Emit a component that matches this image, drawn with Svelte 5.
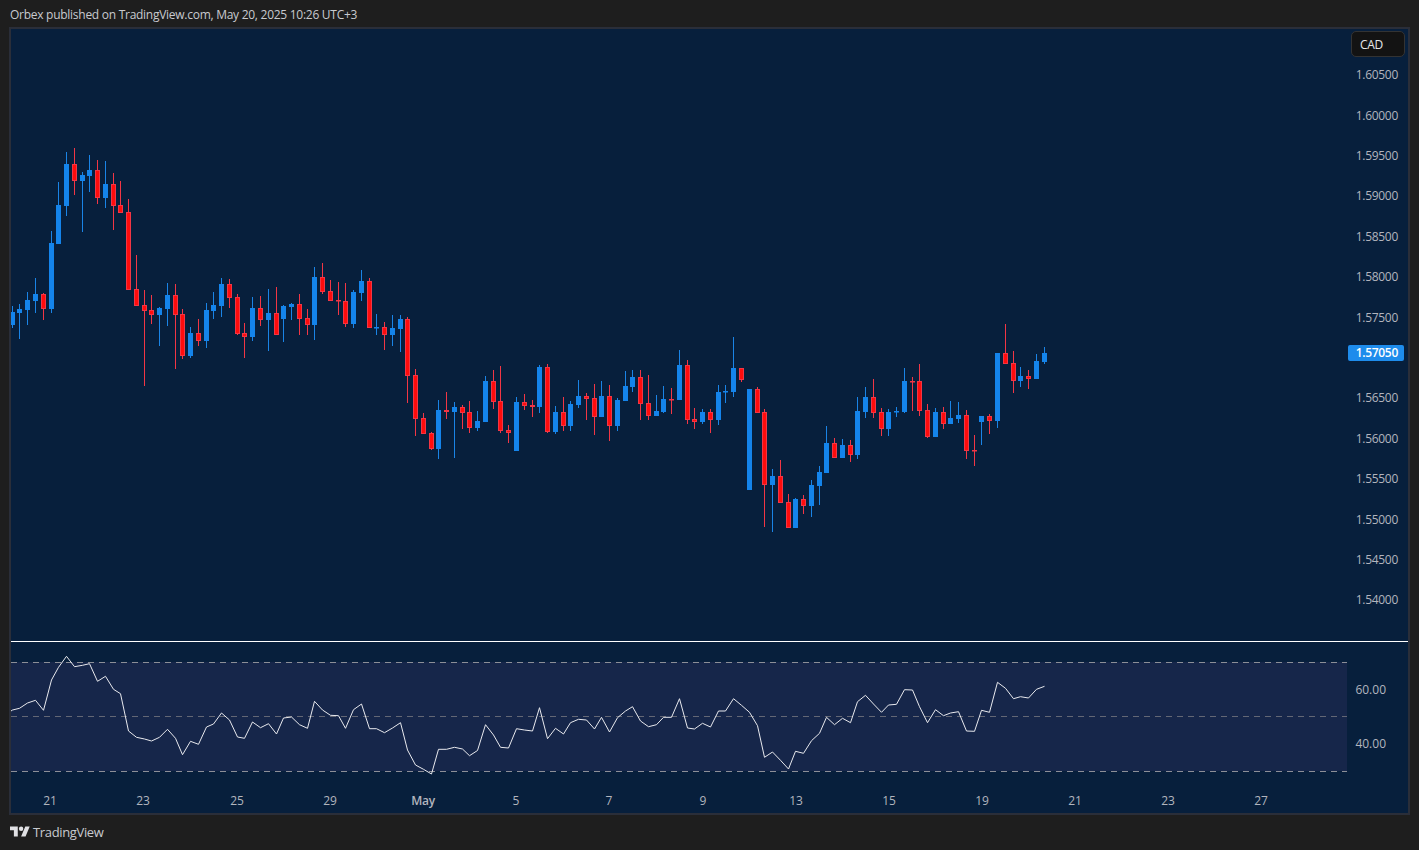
<script>
  const raw = `B528,546,585,594 B522,537,549,627 B486,510,540,585 B444,492,513,549 R489,492,537,570 B303,339,537,549 B156,225,342,342 B66,102,228,258 R54,102,153,195 B126,135,153,306 B75,120,138,186 R90,120,204,222 B93,162,204,234 R129,162,228,300 R153,225,249,249 R207,246,480,480 R375,477,528,528 R480,525,543,768 R495,540,555,582 B531,534,555,648 B459,495,537,588 R462,495,555,717 R537,552,678,687 B591,609,678,684 R567,609,633,648 B519,540,633,654 B486,525,543,567 B444,462,528,561 R447,462,504,534 R492,501,612,615 R579,609,621,684 B501,534,621,633 R498,534,570,588 B477,549,570,663 R471,549,615,615 B525,528,567,636 B519,522,531,570 R492,522,567,615 R537,564,585,615 B411,441,585,630 R399,441,486,492 R450,483,513,513 R456,510,513,555 R459,513,582,591 B480,486,582,594 B420,453,489,513 R444,453,594,594 B552,591,594,615 R576,591,615,660 B555,594,615,648 B555,567,597,666`;
  const toY = (z, o) => o + z / 3;
  const parse = (s, o) => s.split(' ').map((t) => {
    const [h, a, b, l] = t.slice(1).split(',').map((n) => toY(+n, o));
    return { up: t[0] === 'B', h, a, b, l };
  });
  const part1 = parse(raw, 130);
  const part2 = [{ up: false, h: 317, a: 319, b: 376, l: 403 }].concat(parse(`R117,135,267,318 R249,264,312,312 R306,309,357,360 B210,240,357,387 R186,240,246,267 B216,231,246,384 R225,231,249,297 R213,246,294,309 B243,273,294,303 B138,153,276,276 R120,153,216,237 R108,213,303,309 R285,300,309,339 B201,216,363,363 R192,216,228,240 R210,225,231,261 B105,111,231,249 R102,111,306,309 B228,246,306,312 R201,246,288,303 B213,222,288,303 B150,198,225,234 R189,198,207,270 R162,204,261,315 B153,198,261,261 R165,198,288,333 B204,210,288,303 B123,168,213,213 B120,141,171,186 R120,141,222,270 R135,219,258,270 B195,243,258,258 B168,207,246,249 R174,207,210,252 B60,105,210,210 R90,105,270,282 R234,267,276,297 B237,246,276,282 R237,246,270,309 B165,186,270,285 B165,183,186,219 B21,114,186,201 R114,114,150,156 B177,177,480,480 R171,177,249,249 R237,246,465,591 B417,438,465,606 R390,438,519,519 R492,516,594,594 B504,507,594,594`, 330));
  const part3 = parse(`R555,567,588,612 B510,525,588,621 B468,486,528,585 B348,399,489,489 R384,399,444,444 B387,405,444,444 R390,405,435,456 B261,303,435,447 B231,261,306,324 R207,261,309,324 R294,306,357,378 B297,306,357,378 B291,303,306,321 B174,213,306,309 R201,213,216,303 R162,213,303,318 R282,300,381,384 B294,306,381,381 R291,306,342,357 B273,324,342,342 B276,315,327,339 R300,315,423,447 R375,420,423,468 B318,318,336,405 R312,318,333,372 B129,129,333,354 R42,129,162,162 R123,159,213,249 B171,198,213,231 R180,198,207,237 B132,153,207,207 B111,129,156,162`, 310);
  const pixelX = (i) => 12.24 + i * 7.758;
  const candles = [...part1, ...part2, ...part3].map((c, i) => {
    const px = Math.floor(pixelX(i));
    const top = Math.round(c.a);
    return { ...c, px, top, hi: Math.round(c.h), lo: Math.round(c.l), height: Math.max(1, Math.round(c.b) - top) };
  });

  const rsiHead = [240,235,219,211,241,150,112,79,110,106,101,154,139,178,191,303,322,327,333,322,298,325,374,334,343,291,282,249,270,321,325,276,293,281,312,264,261,284,295,214,240,256,257,295,239,222,296,296,308,294,278,360,405,418,432,358,358,352,357,377].map((z) => 630 + z / 3);
  const rsiTail = [750.5,724.7,735,747.3,748,728.7,730,731,707.7,738.7,728.3,734,722.7,719.3,720,729,717.3,732,717.7,711,706.7,721,726.7,724.7,717.3,717.3,698.7,728,729,723.3,727,711,711,698.7,705.3,712.3,725.7,757.3,752,760.3,769,751.3,753.3,740.7,733.3,717.3,724.7,718.3,722.7,701.7,695.3,704,712.3,705,704.3,689.7,690,706.7,722.7,709.7,715.7,713,711.7,731,731.3,710.3,712.3,682.3,688.3,698.7,696.7,698,689.3,686.3];
  const rsi = '11,711 ' + [...rsiHead, ...rsiTail].map((y, i) => `${(Math.floor(pixelX(i)) + 0.5).toFixed(1)},${y.toFixed(1)}`).join(' ');

  const prices = ['1.60500','1.60000','1.59500','1.59000','1.58500','1.58000','1.57500','1.57000','1.56500','1.56000','1.55500','1.55000','1.54500','1.54000'];
  const priceTicks = prices.map((p, i) => ({ p, y: 75 + i * 40.4 })).filter((t) => t.p !== '1.57000');
  const dates = [['21',50],['23',143],['25',237],['29',330],['May',423],['5',516],['7',609],['9',703],['13',796],['15',889],['19',982],['21',1075],['23',1168],['27',1261]];
</script>

<div class="page">
  <header class="title">Orbex published on TradingView.com, May 20, 2025 10:26 UTC+3</header>
  <main class="frame">
    <svg class="chart" viewBox="0 0 1419 850" width="1419" height="850" role="img" aria-label="Candlestick chart with RSI">
      <rect class="band" x="11" y="662" width="1336" height="109" />
      <rect class="sep" x="11" y="641" width="1397" height="1" />
      <line class="dash" x1="11" x2="1347" y1="662.5" y2="662.5" />
      <line class="dash mid" x1="11" x2="1347" y1="716.5" y2="716.5" />
      <line class="dash" x1="11" x2="1347" y1="771.5" y2="771.5" />
      {#each candles as c}
        <g class={c.up ? 'up' : 'down'}>
          <rect class="wick" x={c.px} y={c.hi} width="1" height={Math.max(0, c.lo - c.hi)} />
          <rect class="body" x={c.px - 1.5} y={c.top + 0.5} width="4" height={Math.max(0.5, c.height - 1)} />
        </g>
      {/each}
      <polyline class="rsi" points={rsi} />
      {#each priceTicks as t}
        <text class="axis price" x="1398" y={t.y + 4.2} text-anchor="end">{t.p}</text>
      {/each}
      <text class="axis" x="1386" y="694" text-anchor="end">60.00</text>
      <text class="axis" x="1386" y="748" text-anchor="end">40.00</text>
      {#each dates as d}
        <text class="axis" class:strong={d[0] === 'May'} x={d[1]} y="805" text-anchor="middle">{d[0]}</text>
      {/each}
    </svg>
    <div class="currency">CAD</div>
    <div class="tag">1.57050</div>
  </main>
  <footer class="brand">
    <svg class="logo" viewBox="0 0 36 28" width="20" height="16" aria-hidden="true">
      <path d="M14 22H7V11H0V4h14v18zM28 22h-8l7.5-18h8L28 22z" />
      <circle cx="20" cy="8" r="4" />
    </svg>
    <span>TradingView</span>
  </footer>
</div>

<style>
  :global(body) {
    margin: 0;
    background: #1e1e1e;
    overflow: hidden;
  }
  .page {
    width: 1419px;
    height: 850px;
    display: flex;
    flex-direction: column;
    font-family: "Open Sans", "Noto Sans", sans-serif;
    color: #d1d4dc;
    background: #1e1e1e;
  }
  .title {
    height: 27px;
    padding: 7px 0 0 10px;
    box-sizing: border-box;
    font-size: 12px;
    line-height: 16px;
    letter-spacing: -0.27px;
    color: #c8cacf;
  }
  .frame {
    position: relative;
    margin-left: 9px;
    width: 1401px;
    height: 788px;
    box-sizing: border-box;
    border: 2px solid #2a2e39;
    background: #071f3c;
    overflow: hidden;
  }
  .chart {
    position: absolute;
    left: -11px;
    top: -29px;
    display: block;
  }
  .band { fill: #16264a; }
  .sep { fill: #ffffff; }
  .dash {
    stroke: #8c8f98;
    stroke-width: 1;
    stroke-dasharray: 6 5;
    shape-rendering: crispEdges;
  }
  .dash.mid { stroke: #636775; }
  .body { stroke-width: 1; }
  .up .wick { fill: #1a84e6; }
  .up .body { fill: #1484eb; stroke: #1484eb; }
  .down .wick { fill: #f23645; }
  .down .body { fill: #ff0c0c; stroke: #f23645; }
  .rsi {
    fill: none;
    stroke: #e8e9ee;
    stroke-width: 1;
    stroke-linejoin: round;
  }
  .axis {
    font-size: 12px;
    fill: #b2b5be;
  }
  .axis.price { letter-spacing: -0.3px; }
  .axis.strong { font-weight: 600; letter-spacing: -0.3px; }
  .currency {
    position: absolute;
    left: 1340px;
    top: 2px;
    width: 54px;
    height: 26px;
    box-sizing: border-box;
    padding-left: 8px;
    line-height: 26px;
    font-size: 12px;
    letter-spacing: -0.3px;
    color: #e6e7ea;
    background: #131313;
    border: 1px solid #333;
    border-radius: 5px;
  }
  .tag {
    position: absolute;
    left: 1337px;
    top: 316px;
    width: 56px;
    height: 16px;
    box-sizing: border-box;
    padding-right: 6px;
    text-align: right;
    font-size: 12px;
    font-weight: 600;
    letter-spacing: -0.3px;
    line-height: 16px;
    color: #fff;
    background: #1e8cec;
    border-radius: 2px;
  }
  .brand {
    display: flex;
    align-items: center;
    gap: 3px;
    padding: 8px 0 0 10px;
    font-size: 13px;
    letter-spacing: -0.35px;
    line-height: 18px;
    color: #c8cacf;
  }
  .logo { fill: #e0e1e4; }
</style>
